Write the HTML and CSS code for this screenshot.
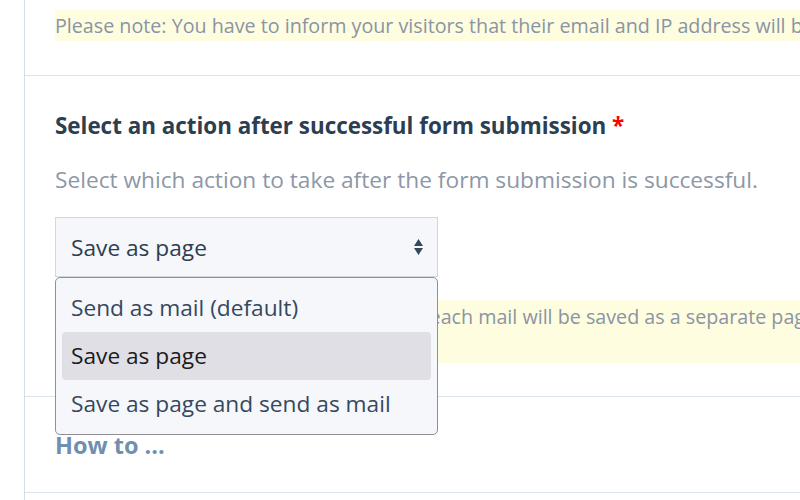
FILE: index.html
```html
<!DOCTYPE html>
<html>
<head>
<meta charset="utf-8">
<link rel="stylesheet" href="styles.css">
</head>
<body>
<div class="layout">
  <div class="gutter"></div>
  <main class="main">
    <section class="section section-first">
      <p class="note">Please note: You have to inform your visitors that their email and IP address will be stored when they submit the form.</p>
    </section>
    <section class="section section-action">
      <h3 class="label">Select an action after successful form submission <span class="req">*</span></h3>
      <p class="help">Select which action to take after the form submission is successful.</p>
      <div class="select-wrap">
        <div class="select">
          <span class="select-value">Save as page</span>
          <svg class="select-arrows" width="9" height="17" viewBox="0 0 9 17"><path d="M4.5 0 L9 7 L0 7 Z M0 9 L9 9 L4.5 16 Z" fill="#34495e"/></svg>
        </div>
        <ul class="dropdown">
          <li class="option">Send as mail (default)</li>
          <li class="option option-active">Save as page</li>
          <li class="option">Save as page and send as mail</li>
        </ul>
      </div>
      <p class="note note-two">Please note: If you select "Save as page", each mail will be saved as a separate page below the current page in the page tree.</p>
    </section>
    <section class="section section-howto">
      <a class="howto">How to ...</a>
    </section>
  </main>
</div>
</body>
</html>
```
FILE: styles.css
```css
html, body {
  margin: 0;
  padding: 0;
  background: #ffffff;
  overflow: hidden;
  width: 800px;
  height: 500px;
}
body {
  font-family: "Open Sans", "Noto Sans", sans-serif;
  font-size: 22.7px;
  color: #34495e;
}
.layout {
  display: flex;
  width: 1200px;
  min-height: 500px;
}
.gutter {
  width: 24px;
  flex: none;
  border-right: 1px solid #d4deea;
}
.main {
  flex: 1;
}
.section {
  border-bottom: 1px solid #dde3ea;
  padding: 0 0 0 30px;
}
.section-first {
  padding-top: 10px;
  padding-bottom: 34px;
}
.note {
  margin: 0;
  background: #fefddf;
  color: #8a94a4;
  font-size: 19.7px;
  line-height: 29px;
  padding: 1px 0;
  white-space: nowrap;
}
.note-two {
  white-space: normal;
  width: 1010px;
  margin-top: 23px;
  padding: 2px 0 3px;
}
.section-action {
  padding-top: 34px;
  padding-bottom: 33px;
}
.label {
  margin: 0;
  font-size: 22.4px;
  font-weight: 700;
  line-height: 32px;
  color: #2c3e50;
}
.req {
  color: #ff0000;
}
.help {
  margin: 23px 0 0;
  line-height: 30px;
  color: #8d97a6;
}
.select-wrap {
  position: relative;
  width: 383px;
  margin-top: 22px;
}
.select {
  box-sizing: border-box;
  height: 60px;
  border: 1px solid #cfd7e2;
  background: #f5f7fa;
  display: flex;
  align-items: center;
  justify-content: space-between;
  padding: 0 14px 0 15px;
}
.select-value {
  color: #2c3e50;
}
.select-arrows {
  display: block;
}
.dropdown {
  position: absolute;
  top: 100%;
  left: 0;
  box-sizing: border-box;
  width: 383px;
  margin: 0;
  padding: 6px 6px;
  list-style: none;
  background: #f6f7fb;
  border: 1px solid #8f8f94;
  border-radius: 5px;
  z-index: 2;
}
.option {
  height: 48px;
  line-height: 48px;
  padding-left: 9px;
  color: #34495e;
  border-radius: 4px;
}
.option-active {
  background: #e0dfe5;
  color: #1b1b1b;
}
.section-howto {
  padding-top: 33px;
  padding-bottom: 32px;
}
.howto {
  display: block;
  font-weight: 700;
  line-height: 30px;
  font-size: 23.5px;
  color: #6f8fae;
}
```
